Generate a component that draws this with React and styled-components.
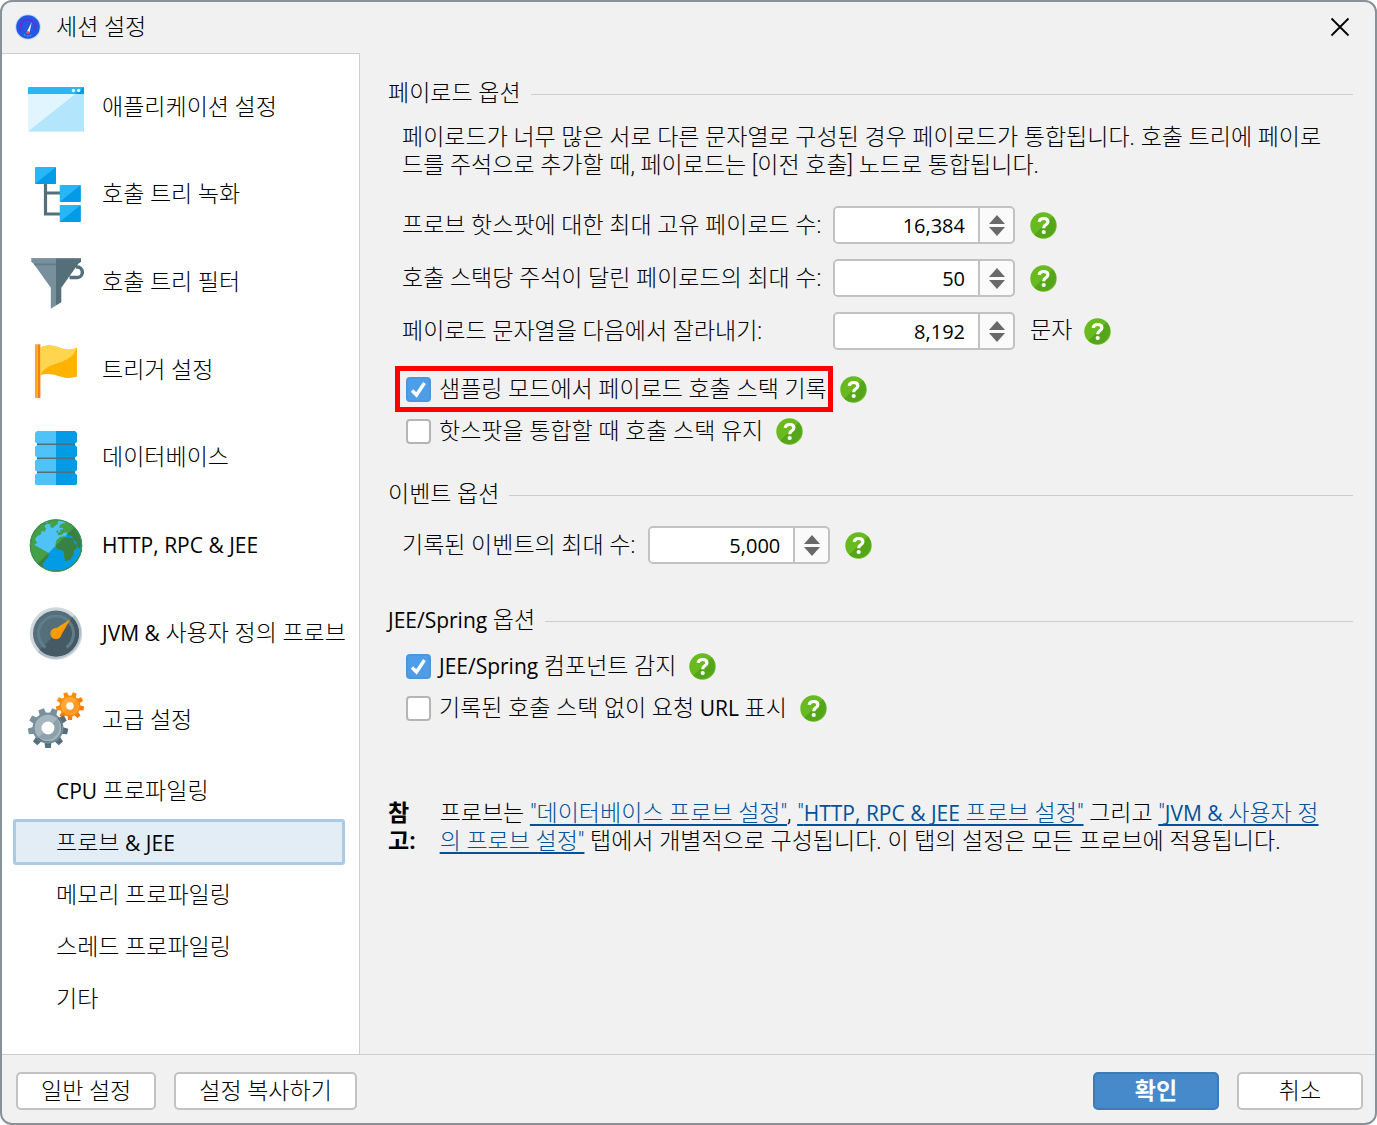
import React from "react";
import styled, { createGlobalStyle, css } from "styled-components";

const GlobalStyle = createGlobalStyle`
  * {
    box-sizing: border-box;
  }
  body {
    margin: 0;
    background: #fff;
  }
  body, button, input {
    font-family: Roboto, "Noto Sans CJK KR", sans-serif;
    font-size: 23px;
    font-weight: 300;
    line-height: 28px;
    color: #000;
  }
`;

const Dialog = styled.div`
  display: flex;
  flex-direction: column;
  min-height: 100vh;
  border: 2px solid #87929a;
  border-radius: 12px;
  background: #f1f1f1;
  overflow: hidden;
`;

const TitleBar = styled.header`
  display: flex;
  align-items: center;
  height: 51px;
  padding: 0 25px 2px 13px;

  h1 {
    flex: 1;
    margin: 0 0 0 15px;
    padding-top: 2px;
    font-size: 23px;
    font-weight: 300;
  }
`;

const CloseButton = styled.button`
  display: flex;
  padding: 0;
  border: none;
  background: none;
`;

const Main = styled.div`
  display: flex;
  flex: 1;
`;

const Sidebar = styled.nav`
  flex: 0 0 358px;
  min-width: 0;
  padding: 9px 14px 0 11px;
  border-top: 1px solid #cdcdcd;
  border-right: 1px solid #cdcdcd;
  background: #fff;
`;

const Categories = styled.ul`
  display: grid;
  grid-auto-rows: 1fr;
  height: 701px;
  margin: 0;
  padding: 0 0 0 15px;
  list-style: none;
`;

const Category = styled.a`
  display: flex;
  align-items: center;
  gap: 18px;
  height: 100%;
  color: inherit;
  text-decoration: none;
  white-space: nowrap;

  svg {
    flex: none;
  }
  > span {
    padding-top: 2px;
  }
`;

const Pages = styled.ul`
  display: grid;
  gap: 6px;
  margin: 0;
  padding: 3px 0;
  list-style: none;
`;

const Page = styled.a`
  display: flex;
  align-items: center;
  height: 46px;
  padding: 3px 0 0 40px;
  border: 3px solid transparent;
  border-radius: 3px;
  color: inherit;
  text-decoration: none;
  ${(props) =>
    props.$active &&
    css`
      border-color: #a9cbe6;
      background: #e3edf6;
    `}
`;

const Content = styled.main`
  flex: 1;
  padding: 25px 22px 0 28px;
`;

const Section = styled.section`
  margin-bottom: ${(props) => props.$gap}px;
`;

const Heading = styled.h2`
  display: flex;
  align-items: center;
  gap: 10px;
  height: 30px;
  margin: 0;
  padding-top: 2px;
  font-size: 23px;
  font-weight: 300;

  &::after {
    content: "";
    flex: 1;
    height: 1px;
    background: #cdcdcd;
  }
`;

const Description = styled.p`
  margin: 16px 24px 26px 14px;
  word-break: break-all;
`;

const Fields = styled.div`
  display: grid;
  grid-template-columns: minmax(431px, max-content) 1fr;
  align-items: center;
  row-gap: 15px;
  margin: 0 14px 18px;
`;

const FieldRow = styled.div`
  display: flex;
  align-items: center;
  gap: 13px;
  margin: 17px 14px 0;
`;

const FieldLabel = styled.label`
  padding-top: 2px;
`;

const FieldValue = styled.div`
  display: flex;
  align-items: center;
  gap: 15px;
`;

const Unit = styled.span`
  display: flex;
  align-items: center;
  gap: 12px;
`;

const Latin = styled.span`
  font-family: "Open Sans", sans-serif;
  font-size: 21px;
  font-weight: 400;
  line-height: 1;
`;

const SpinBox = styled.div`
  display: flex;
  width: 182px;
  height: 38px;
  border: 2px solid #c2c2c2;
  border-radius: 5px;
  background: #fafafa;
  overflow: hidden;

  input {
    flex: 1;
    min-width: 0;
    padding: 2px 13px 0 0;
    border: none;
    border-right: 2px solid #c2c2c2;
    background: #fff;
    font-family: "Open Sans", sans-serif;
    font-size: 20px;
    font-weight: 400;
    text-align: right;
  }
`;

const Arrows = styled.div`
  display: flex;
  flex-direction: column;
  align-items: center;
  justify-content: center;
  gap: 3px;
  width: 33px;

  button {
    display: flex;
    padding: 0;
    border: none;
    background: none;
  }
`;

const HelpButton = styled.button`
  display: flex;
  padding: 0;
  border: none;
  background: none;
`;

const Checks = styled.div`
  margin: ${(props) => props.$top || 0}px 18px 0;
`;

const CheckRow = styled.div`
  display: flex;
  align-items: center;
  gap: 13px;
  height: 42px;
`;

const CheckLabel = styled.label`
  position: relative;
  display: flex;
  align-items: center;
  gap: 8px;
  height: 42px;

  > span {
    padding-top: 2px;
  }
  input {
    appearance: none;
    width: 25px;
    height: 25px;
    margin: 0;
    border: 2px solid #b5b5b5;
    border-radius: 4px;
    background: #fff;
  }
  input:checked {
    border-color: #4a97e0;
    background: #4d9de8
      url("data:image/svg+xml,%3Csvg xmlns='http://www.w3.org/2000/svg' viewBox='0 0 21 21'%3E%3Cpath d='M4 11.5l4.5 4.5L16.500 4' fill='none' stroke='%23fff' stroke-width='3.400'/%3E%3C/svg%3E");
  }

  ${(props) =>
    props.$marked &&
    css`
      &::after {
        content: "";
        position: absolute;
        inset: -2px -6px -2px -11px;
        border: 5px solid #f00;
        pointer-events: none;
      }
    `}
`;

const Note = styled.div`
  display: flex;
  gap: 24px;
  margin: 0 20px 60px 0;
  word-break: break-all;

  strong {
    flex: 0 0 27px;
    font-weight: 700;
  }
  p {
    margin: 0;
  }
  a {
    color: #00529b;
    text-decoration-thickness: 2px;
    text-underline-offset: 3px;
    text-decoration-skip-ink: none;
  }
`;

const Footer = styled.footer`
  display: flex;
  gap: 18px;
  padding: 17px 12px 13px 14px;
  border-top: 1px solid #cdcdcd;
`;

const Spacer = styled.div`
  flex: 1;
`;

const Button = styled.button`
  height: 38px;
  min-width: 126px;
  padding: 2px 23px 0;
  border: 2px solid #c2c2c2;
  border-radius: 5px;
  background: #fff;
  ${(props) =>
    props.$primary &&
    css`
      border-color: #3d7ab8;
      background: #478acb;
      color: #fff;
      font-weight: 700;
    `}
`;

const Logo = () => (
  <svg width="26" height="26" viewBox="0 0 26 26">
    <circle cx="13" cy="13" r="12.800" fill="#c4dcf3" />
    <circle cx="13" cy="13" r="11.800" fill="#2458e4" />
    <path d="M6 16a7.500 7.500 0 1 1 14 0" fill="none" stroke="#6a2bd0" strokeWidth="1.600" />
    <path d="M16.800 8l-2.300 10.500h-3z" fill="#fff" />
    <circle cx="13" cy="18.500" r="1.600" fill="#e8553f" />
    <path d="M9 20.500q4 3 8 0" fill="none" stroke="#4c9bea" strokeWidth="1.300" strokeDasharray="1.500 1.500" />
  </svg>
);

const AppIcon = () => (
  <svg width="56" height="56" viewBox="0 0 56 56">
    <path d="M0 9q0-1 1-1h54q1 0 1 1v43.500H0z" fill="#e1f5fe" />
    <path d="M0 52.500L56 8v44.500z" fill="#b3e5fc" />
    <path d="M0 15V9q0-1 1-1h54q1 0 1 1v6z" fill="#29b6f6" />
    <path d="M47 15l9-7v7z" fill="#039be5" />
    <circle cx="45.500" cy="11.500" r="1.700" fill="#e1f5fe" />
    <circle cx="50.700" cy="11.500" r="1.700" fill="#e1f5fe" />
  </svg>
);

const TreeIcon = () => (
  <svg width="56" height="56" viewBox="0 0 56 56">
    <path d="M17.500 17v31H33M17.500 27H33" fill="none" stroke="#546e7a" strokeWidth="3.200" />
    {[[7, 1], [31.7, 19], [31.7, 39]].map(([x, y]) => (
      <g key={y} transform={`translate(${x} ${y})`}>
        <rect width="21" height="17" rx="1" fill="#29b6f6" />
        <path d="M21 0v16q0 1-1 1H0z" fill="#039be5" />
      </g>
    ))}
  </svg>
);

const FunnelIcon = () => (
  <svg width="56" height="56" viewBox="0 0 56 56">
    <path d="M48 13h1.500a4.800 5.200 0 0 1 0 10.500h-8" fill="none" stroke="#546e7a" strokeWidth="3.400" />
    <path d="M3.300 4H28v47.500l-5.200 3.200V33.700L5.500 9.500 3.300 8z" fill="#78909c" />
    <path d="M28 4h25v4l-2.500 1.500L33.300 33.700v14.600L28 51.500z" fill="#546e7a" />
    <path d="M5.500 9.500H28v1.700H6.700z" fill="#607d8b" />
    <path d="M3.300 4h49.700v1.200H3.300z" fill="#90a4ae" opacity=".5" />
  </svg>
);

const FlagIcon = () => (
  <svg width="56" height="56" viewBox="0 0 56 56">
    <path d="M7 2.300h2.700v54H7z" fill="#f9a825" />
    <path d="M9.700 2.300h2.700v54H9.700z" fill="#f57f17" />
    <path d="M12.300 5.500C22 1 29 5 36 7c5 1.300 9 .5 13-1.500v29c-5 1.700-10 2-16 .2-7-2.200-13-4.200-20.700-1.400z" fill="#ffb300" />
    <path d="M12.300 5.500C22 1 29 5 36 7c5 1.300 9 .5 13-1.500C45 16 38 18 30 21c-8 2.600-14 5-17.700 12z" fill="#ffd54f" />
  </svg>
);

const DatabaseIcon = () => (
  <svg width="56" height="56" viewBox="0 0 56 56">
    <path d="M9 10h38v40H9z" fill="#546e7a" />
    {[2, 16, 30, 44].map((y) => (
      <g key={y} transform={`translate(7 ${y})`}>
        <path d="M2 0h19v12.500H2L0 11V2z" fill="#4fc3f7" />
        <path d="M21 0h19l2 2v9l-2 1.500H21z" fill="#039be5" />
      </g>
    ))}
  </svg>
);

const GlobeIcon = () => (
  <svg width="56" height="56" viewBox="0 0 56 56">
    <defs>
      <clipPath id="lower">
        <path d="M46.500 10L9.500 47 30 60h30V5z" />
      </clipPath>
      <clipPath id="disc">
        <circle cx="28" cy="28.500" r="26.200" />
      </clipPath>
    </defs>
    <circle cx="28" cy="28.500" r="26.200" fill="#4fc3f7" />
    <g clipPath="url(#disc)">
      <path d="M46.500 10L9.500 47 30 60h30V5z" fill="#039be5" />
      <g fill="#43a047">
        <GlobeLand />
      </g>
      <g clipPath="url(#lower)" fill="#388142">
        <GlobeLand />
      </g>
    </g>
    <circle cx="28" cy="28.500" r="25.600" fill="none" stroke="#3f8f47" strokeWidth="1.300" />
  </svg>
);

// continents are plotted on a 168 unit wide grid
const GlobeLand = () => (
  <g transform="translate(-4 -3) scale(0.333)">
    <path d="M16 98L18 66 34 40 62 22 71 29 61 36 67 44 61 53 53 50 51 61 41 66 35 72 34 78 40 86 31 92z" />
    <path d="M18 94L32 93 42 99 52 104 74 117 73 129 62 141 57 150 57 160 44 156 38 143 27 128 21 112z" />
    <path d="M72 20L97 15 103 20 101 30 93 36 87 42 79 40 79 31 69 29z" />
    <path d="M108 33L118 28 128 24 150 38 168 65 172 88 168 104 160 99 158 83 150 78 144 66 132 63 127 55 118 57 114 62 102 64 101 56 110 53 107 46 116 47 118 41 106 42z" />
    <path d="M97 52L102 48 104 53 99 57z" />
    <path d="M94 92L98 78 108 69 120 67 126 72 137 71 146 73 151 88 160 96 157 104 149 111 148 123 138 138 124 141 121 130 120 113 111 107 99 106z" />
  </g>
);

const GaugeIcon = () => (
  <svg width="56" height="56" viewBox="0 0 56 56">
    <circle cx="28" cy="28.500" r="26.200" fill="#cfd8dc" />
    <path d="M46.500 10a26.200 26.200 0 0 1-37 37z" fill="#b0bec5" />
    <circle cx="28" cy="28.500" r="23" fill="#546e7a" />
    <path d="M44.300 12.200a23 23 0 0 1-32.600 32.600z" fill="#455a64" />
    <path d="M17.500 42.500a17.500 17.500 0 1 1 21 0" fill="none" stroke="#607d8b" strokeWidth="3" />
    <path d="M42.300 14.200L32.500 31l-7-6z" fill="#ffa000" />
    <circle cx="28" cy="28.500" r="5.500" fill="#ffa000" />
    <path d="M42.300 14.200L24 32.500a5.500 5.500 0 0 0 9.200-2z" fill="#ff8f00" opacity=".5" />
  </svg>
);

const Gear = ({ x, y, teeth, tip, base, hole, fill, shade, ring, ringShade }) => (
  <g transform={`translate(${x} ${y})`}>
    {Array.from({ length: teeth }, (_, i) => (
      <path
        key={i}
        d={`M${-tip / 4} 0L${-tip / 7} ${tip}H${tip / 7}L${tip / 4} 0z`}
        fill={i <= teeth / 8 || i > teeth * 0.6 ? shade : fill}
        transform={`rotate(${(i * 360) / teeth})`}
      />
    ))}
    <circle r={base} fill={fill} />
    <path d={`M${base * 0.7} ${-base * 0.7}A${base} ${base} 0 0 1 ${-base * 0.7} ${base * 0.7}z`} fill={shade} />
    <circle r={base * 0.86} fill={ring} />
    <path d={`M${base * 0.6} ${-base * 0.6}A${base * 0.86} ${base * 0.86} 0 0 1 ${-base * 0.6} ${base * 0.6}z`} fill={ringShade} />
    <circle r={hole} fill="#fff" />
  </g>
);

const GearsIcon = () => (
  <svg width="56" height="56" viewBox="0 0 56 56">
    <Gear x={42} y={14} teeth={9} tip={14} base={10.5} hole={3.8} fill="#fb8c00" shade="#f57c00" ring="#ffa93a" ringShade="#ff9820" />
    <Gear x={20} y={36} teeth={9} tip={20} base={15.5} hole={6.5} fill="#78909c" shade="#546e7a" ring="#a6b6be" ringShade="#8ea1ab" />
  </svg>
);

const Help = () => (
  <HelpButton type="button" aria-label="도움말">
    <svg width="27" height="27" viewBox="0 0 27 27">
      <circle cx="13.500" cy="13.500" r="13.200" fill="#68ba1e" />
      <path d="M22.800 4.200a13.200 13.200 0 0 1-18.600 18.600z" fill="#55a51a" />
      <path d="M9.200 9.800q.3-3.300 4.500-3.300 4.200 0 4.200 3.200 0 1.900-2.200 3.200-2 1.100-2 3.300" fill="none" stroke="#fff" strokeWidth="3.200" />
      <circle cx="13.700" cy="20" r="2.100" fill="#fff" />
    </svg>
  </HelpButton>
);

const Spinner = ({ id, value }) => (
  <SpinBox>
    <input id={id} type="text" defaultValue={value} />
    <Arrows>
      <button type="button" aria-label="증가">
        <svg width="16" height="9" viewBox="0 0 16 9">
          <path d="M8 0l8 9H0z" fill="#696969" />
        </svg>
      </button>
      <button type="button" aria-label="감소">
        <svg width="16" height="9" viewBox="0 0 16 9">
          <path d="M0 0h16L8 9z" fill="#696969" />
        </svg>
      </button>
    </Arrows>
  </SpinBox>
);

const Check = ({ children, checked, marked }) => (
  <CheckRow>
    <CheckLabel $marked={marked}>
      <input type="checkbox" defaultChecked={checked} />
      <span>{children}</span>
    </CheckLabel>
    <Help />
  </CheckRow>
);

const categories = [
  { icon: AppIcon, label: "애플리케이션 설정" },
  { icon: TreeIcon, label: "호출 트리 녹화" },
  { icon: FunnelIcon, label: "호출 트리 필터" },
  { icon: FlagIcon, label: "트리거 설정" },
  { icon: DatabaseIcon, label: "데이터베이스" },
  { icon: GlobeIcon, label: <Latin>HTTP, RPC &amp; JEE</Latin> },
  { icon: GaugeIcon, label: <><Latin>JVM &amp;</Latin> 사용자 정의 프로브</> },
  { icon: GearsIcon, label: "고급 설정" },
];

const pages = [
  { label: <><Latin>CPU</Latin> 프로파일링</> },
  { label: <>프로브 <Latin>&amp; JEE</Latin></>, active: true },
  { label: "메모리 프로파일링" },
  { label: "스레드 프로파일링" },
  { label: "기타" },
];

const App = () => (
  <>
    <GlobalStyle />
    <Dialog>
      <TitleBar>
        <Logo />
        <h1>세션 설정</h1>
        <CloseButton type="button" aria-label="닫기">
          <svg width="20" height="20" viewBox="0 0 20 20">
            <path d="M1.500 1.500l17 17M18.500 1.500l-17 17" stroke="#000" strokeWidth="1.800" />
          </svg>
        </CloseButton>
      </TitleBar>

      <Main>
        <Sidebar>
          <Categories>
            {categories.map(({ icon: Icon, label }, i) => (
              <li key={i}>
                <Category href="#">
                  <Icon />
                  <span>{label}</span>
                </Category>
              </li>
            ))}
          </Categories>
          <Pages>
            {pages.map(({ label, active }, i) => (
              <li key={i}>
                <Page href="#" $active={active}>
                  <span>{label}</span>
                </Page>
              </li>
            ))}
          </Pages>
        </Sidebar>

        <Content>
          <Section $gap={27}>
            <Heading>페이로드 옵션</Heading>
            <Description>
              페이로드가 너무 많은 서로 다른 문자열로 구성된 경우 페이로드가 통합됩니다. 호출 트리에 페이로드를 주석으로 추가할 때, 페이로드는 [이전 호출] 노드로 통합됩니다.
            </Description>
            <Fields>
              <FieldLabel htmlFor="maxPayloads">프로브 핫스팟에 대한 최대 고유 페이로드 수:</FieldLabel>
              <FieldValue>
                <Spinner id="maxPayloads" value="16,384" />
                <Help />
              </FieldValue>
              <FieldLabel htmlFor="maxAnnotated">호출 스택당 주석이 달린 페이로드의 최대 수:</FieldLabel>
              <FieldValue>
                <Spinner id="maxAnnotated" value="50" />
                <Help />
              </FieldValue>
              <FieldLabel htmlFor="cutoff">페이로드 문자열을 다음에서 잘라내기:</FieldLabel>
              <FieldValue>
                <Spinner id="cutoff" value="8,192" />
                <Unit>
                  문자
                  <Help />
                </Unit>
              </FieldValue>
            </Fields>
            <Checks>
              <Check checked marked>샘플링 모드에서 페이로드 호출 스택 기록</Check>
              <Check>핫스팟을 통합할 때 호출 스택 유지</Check>
            </Checks>
          </Section>

          <Section $gap={41}>
            <Heading>이벤트 옵션</Heading>
            <FieldRow>
              <FieldLabel htmlFor="maxEvents">기록된 이벤트의 최대 수:</FieldLabel>
              <FieldValue>
                <Spinner id="maxEvents" value="5,000" />
                <Help />
              </FieldValue>
            </FieldRow>
          </Section>

          <Section $gap={71}>
            <Heading>
              <span><Latin>JEE/Spring</Latin> 옵션</span>
            </Heading>
            <Checks $top={10}>
              <Check checked><Latin>JEE/Spring</Latin> 컴포넌트 감지</Check>
              <Check>기록된 호출 스택 없이 요청 <Latin>URL</Latin> 표시</Check>
            </Checks>
          </Section>

          <Note>
            <strong>참고:</strong>
            <p>
              프로브는 <a href="#">"데이터베이스 프로브 설정"</a>, <a href="#">"<Latin>HTTP, RPC &amp; JEE</Latin> 프로브 설정"</a> 그리고 <a href="#">"<Latin>JVM &amp;</Latin> 사용자 정의 프로브 설정"</a> 탭에서 개별적으로 구성됩니다. 이 탭의 설정은 모든 프로브에 적용됩니다.
            </p>
          </Note>
        </Content>
      </Main>

      <Footer>
        <Button type="button">일반 설정</Button>
        <Button type="button">설정 복사하기</Button>
        <Spacer />
        <Button type="button" $primary>확인</Button>
        <Button type="button">취소</Button>
      </Footer>
    </Dialog>
  </>
);

export default App;
